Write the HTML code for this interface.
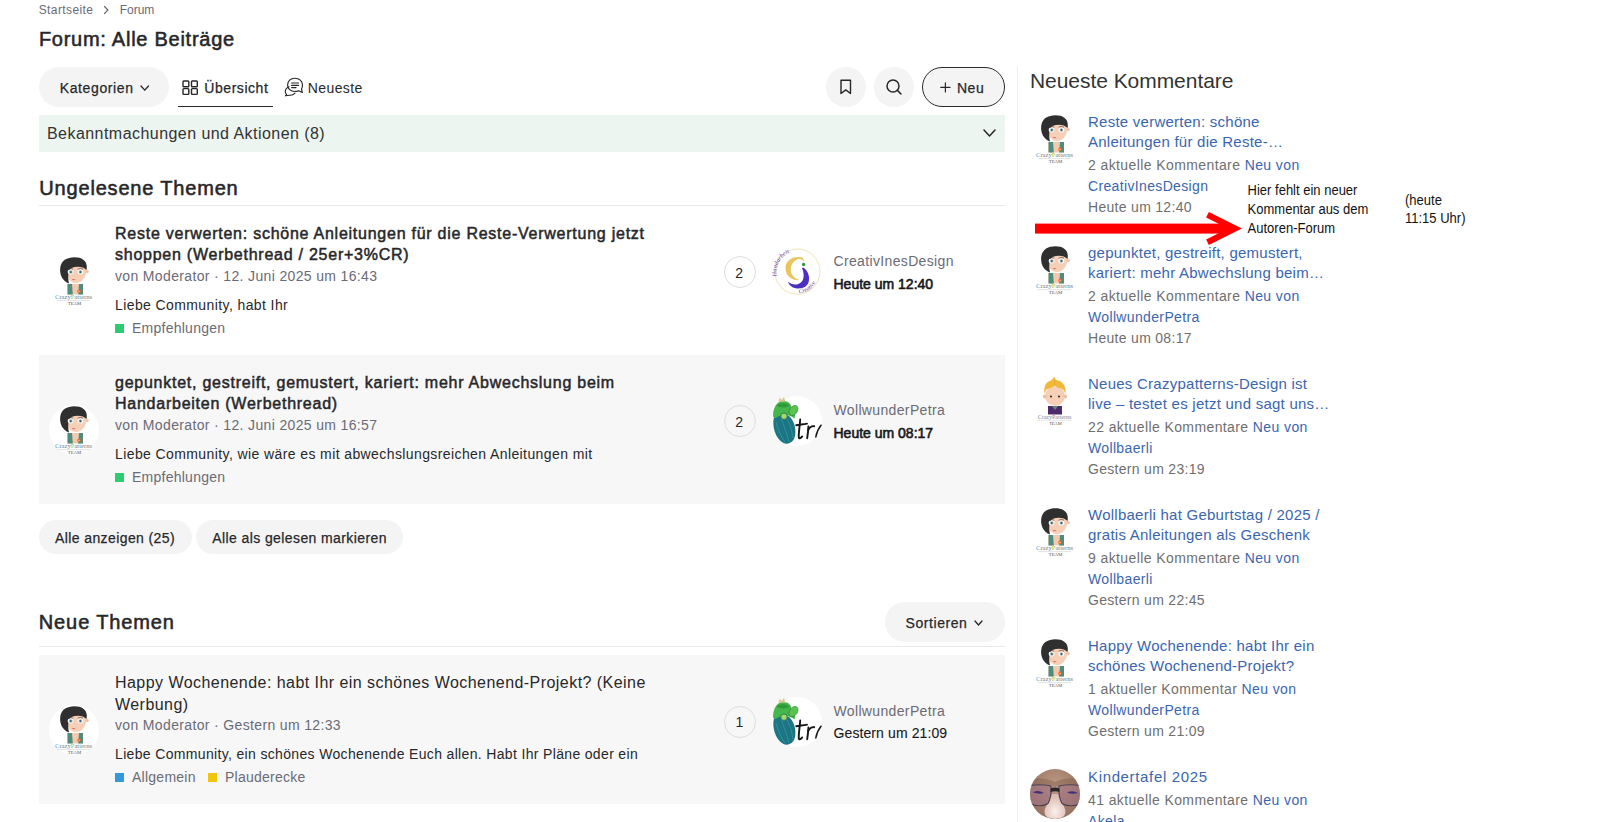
<!DOCTYPE html><html><head><meta charset="utf-8"><style>
html,body{margin:0;padding:0;background:#fff;width:1607px;height:822px;overflow:hidden;position:relative;}
body{font-family:"Liberation Sans",sans-serif;}
.t{position:absolute;white-space:nowrap;}
.r{position:absolute;}
</style></head><body>
<div class="t" style="left:38.70px;top:3.74px;font-size:12px;line-height:12px;color:#6b6b76;letter-spacing:0.4px;">Startseite</div>
<svg class="r" style="left:102px;top:5px" width="8" height="10" viewBox="0 0 8 10"><path d="M2.5 1.5 L6 5 L2.5 8.5" fill="none" stroke="#6b6b76" stroke-width="1.2" stroke-linecap="round" stroke-linejoin="round"/></svg>
<div class="t" style="left:119.70px;top:3.74px;font-size:12px;line-height:12px;color:#6b6b76;">Forum</div>
<div class="t" style="left:38.90px;top:28.77px;font-size:20px;line-height:20px;color:#27272a;letter-spacing:0.74px;-webkit-text-stroke:0.55px #27272a;">Forum: Alle Beiträge</div>
<div class="r" style="left:39px;top:67px;width:130px;height:40px;background:#f4f4f5;border-radius:20px;"></div>
<div class="t" style="left:59.80px;top:81.15px;font-size:14px;line-height:14px;color:#27272a;letter-spacing:0.6px;-webkit-text-stroke:0.25px #27272a;">Kategorien</div>
<svg class="r" style="left:140px;top:84.8px" width="9.5" height="6.2" viewBox="0 0 9.5 6.2"><path d="M1 1 L4.75 5.2 L8.5 1" fill="none" stroke="#27272a" stroke-width="1.3" stroke-linecap="round" stroke-linejoin="round"/></svg>
<svg class="r" style="left:182px;top:79.5px" width="17" height="16" viewBox="0 0 17 16"><g fill="none" stroke="#27272a" stroke-width="1.4"><rect x="1" y="1" width="5.8" height="5.8" rx="0.8"/><rect x="9.5" y="1" width="5.8" height="5.8" rx="0.8"/><rect x="1" y="8.6" width="5.8" height="5.8" rx="0.8"/><rect x="9.5" y="8.6" width="5.8" height="5.8" rx="0.8"/></g></svg>
<div class="t" style="left:204.30px;top:81.15px;font-size:14px;line-height:14px;color:#27272a;letter-spacing:0.55px;-webkit-text-stroke:0.25px #27272a;">Übersicht</div>
<div class="r" style="left:178px;top:105.5px;width:95px;height:1.6px;background:#27272a;"></div>
<svg class="r" style="left:284px;top:77px" width="20" height="20" viewBox="0 0 20 20"><g fill="none" stroke="#27272a" stroke-width="1.15" stroke-linejoin="round" stroke-linecap="round"><path d="M5 9.8 C2.8 10.8 1.3 12.5 1.3 14.6 C1.3 15.8 1.8 16.8 2.6 17.6 L1.4 18.8 L5.6 18.2 C7.6 18.4 9.6 17.6 11 16.2"/><path d="M10.8 1.2 C6.6 1.2 3.6 4 3.6 7.9 C3.6 11.7 6.6 14.5 10.8 14.5 C12.2 14.5 13.5 14.2 14.6 13.7 L18.4 15.6 L17.5 12 C18.2 10.9 18.5 9.4 18.5 7.9 C18.5 4 15.2 1.2 10.8 1.2Z"/><path d="M7.6 6 h7 M7.6 8.4 h7 M7.6 10.6 h4.5"/></g></svg>
<div class="t" style="left:307.80px;top:81.15px;font-size:14px;line-height:14px;color:#27272a;letter-spacing:0.4px;">Neueste</div>
<div class="r" style="left:826px;top:67px;width:40px;height:40px;background:#f4f4f5;border-radius:20px;"></div>
<svg class="r" style="left:839px;top:79px" width="14" height="16" viewBox="0 0 14 16"><path d="M2 1.2 h9.5 v13.3 l-4.75 -3.6 l-4.75 3.6z" fill="none" stroke="#27272a" stroke-width="1.4" stroke-linejoin="round"/></svg>
<div class="r" style="left:874px;top:67px;width:40px;height:40px;background:#f4f4f5;border-radius:20px;"></div>
<svg class="r" style="left:885px;top:78px" width="18" height="18" viewBox="0 0 18 18"><circle cx="8" cy="8" r="6" fill="none" stroke="#27272a" stroke-width="1.5"/><path d="M12.4 12.4 L16 16" stroke="#27272a" stroke-width="1.5" stroke-linecap="round"/></svg>
<div class="r" style="left:922px;top:67px;width:81px;height:38px;background:#f4f4f5;border-radius:20px;border:1px solid #2b2b2b;"></div>
<svg class="r" style="left:940px;top:82px" width="11" height="11" viewBox="0 0 11 11"><path d="M5.4 0.8 V10 M0.8 5.4 H10" stroke="#27272a" stroke-width="1.2" stroke-linecap="round"/></svg>
<div class="t" style="left:957.00px;top:81.15px;font-size:14px;line-height:14px;color:#27272a;letter-spacing:0.5px;-webkit-text-stroke:0.25px #27272a;">Neu</div>
<div class="r" style="left:39px;top:115px;width:966px;height:37px;background:#edf5f0;"></div>
<div class="t" style="left:47.00px;top:125.66px;font-size:16px;line-height:16px;color:#333;letter-spacing:0.45px;">Bekanntmachungen und Aktionen (8)</div>
<svg class="r" style="left:982.5px;top:129px" width="13" height="8" viewBox="0 0 13 8"><path d="M1 1 L6.5 7 L12 1" fill="none" stroke="#27272a" stroke-width="1.5" stroke-linecap="round" stroke-linejoin="round"/></svg>
<div class="r" style="left:1017px;top:67px;width:1px;height:755px;background:#ededed;"></div>
<div class="t" style="left:39.30px;top:178.07px;font-size:20px;line-height:20px;color:#27272a;letter-spacing:0.82px;-webkit-text-stroke:0.55px #27272a;">Ungelesene Themen</div>
<div class="r" style="left:39px;top:205px;width:966px;height:1px;background:#e8e8e8;"></div>
<svg class="r" style="left:48.8px;top:255.8px" width="50" height="50" viewBox="0 0 50 50">
<path d="M18.5 28 h15.5 v10.5 h-15.5z" fill="#f3c9b0"/>
<path d="M18.5 28 h4.5 l0.8 10.5 h-5.3z" fill="#4f8c7b"/><path d="M34 28 h-4 l-0.8 10.5 h4.8z" fill="#4f8c7b"/>
<circle cx="30" cy="35.3" r="1.7" fill="#e8692d"/><circle cx="30" cy="35.3" r="0.6" fill="#fff3c0"/>
<path d="M17 10 C17 6 21 4.5 27 4.5 C33 4.5 37.5 7 37.5 13 C37.5 21 33 27 27 27 C21 27 17 21 17 14z" fill="#f6cfb7"/>
<circle cx="38.2" cy="15.5" r="1.6" fill="#f0bfa5"/>
<path d="M20 27.5 C13.5 25 10.5 19 11.2 12 C12 4.5 18 1.2 25.5 1.2 C32.5 1.2 37.8 4.5 37.8 10.5 L37.6 14 C34.5 10.6 28 9.6 22.5 12 C19 14.5 18.6 21 20 27.5z" fill="#2f2f2f"/>
<ellipse cx="21.6" cy="16" rx="2.9" ry="2.4" fill="#fff"/><ellipse cx="31.4" cy="16" rx="2.9" ry="2.4" fill="#fff"/>
<circle cx="21.8" cy="16" r="1.8" fill="#8fb0b4"/><circle cx="31.4" cy="16" r="1.8" fill="#8fb0b4"/>
<circle cx="21.8" cy="16" r="0.8" fill="#2b3b3b"/><circle cx="31.4" cy="16" r="0.8" fill="#2b3b3b"/>
<path d="M18.8 13.2 q2.6 -1.6 5.4 0 M28.6 13.2 q2.6 -1.6 5.4 0" stroke="#3a3030" stroke-width="0.6" fill="none"/>
<path d="M22.8 23.3 q1.8 1.6 3.8 0.2 q-1.9 -0.4 -3.8 -0.2z" fill="#d9503a"/>
<text x="24.5" y="43" font-size="6.3" text-anchor="middle" fill="#6f7f8a" font-family="Liberation Serif" textLength="37" lengthAdjust="spacingAndGlyphs"><tspan fill="#4aa8d8">C</tspan>razy<tspan fill="#8cc63f">P</tspan>atterns</text>
<path d="M8 44.6 h33" stroke="#c9c9c9" stroke-width="0.5"/>
<text x="25.5" y="48.8" font-size="4.8" text-anchor="middle" fill="#555" font-family="Liberation Serif">TEAM</text></svg>
<div class="t" style="left:115.00px;top:225.96px;font-size:16px;line-height:16px;color:#27272a;letter-spacing:0.75px;-webkit-text-stroke:0.5px #27272a;">Reste verwerten: schöne Anleitungen für die Reste-Verwertung jetzt</div>
<div class="t" style="left:115.00px;top:246.96px;font-size:16px;line-height:16px;color:#27272a;letter-spacing:0.75px;-webkit-text-stroke:0.5px #27272a;">shoppen (Werbethread / 25er+3%CR)</div>
<div class="t" style="left:115.00px;top:268.85px;font-size:14px;line-height:14px;color:#6b6b76;letter-spacing:0.35px;">von Moderator · 12. Juni 2025 um 16:43</div>
<div class="t" style="left:115.00px;top:297.75px;font-size:14px;line-height:14px;color:#27272a;letter-spacing:0.4px;">Liebe Community, habt Ihr</div>
<div class="r" style="left:115px;top:324px;width:9px;height:9px;background:#2ecc71;"></div>
<div class="t" style="left:132.00px;top:320.85px;font-size:14px;line-height:14px;color:#6b6b76;letter-spacing:0.25px;">Empfehlungen</div>
<div class="r" style="left:724px;top:256px;width:30px;height:30px;background:transparent;border:1px solid #dedede;border-radius:50%;"></div>
<div class="t" style="left:735.30px;top:266.15px;font-size:14px;line-height:14px;color:#27272a;">2</div>
<svg class="r" style="left:772px;top:247px" width="50" height="50" viewBox="0 0 50 50"><circle cx="25" cy="25" r="25" fill="#fff"/>
<circle cx="25.4" cy="24.6" r="22.6" fill="none" stroke="#efdca6" stroke-width="0.8"/>
<path d="M31.5 11 C23 7.5 13.2 12.5 13.5 21.5 C13.8 29.5 20.5 34 27.5 33 C21.5 31 18.3 27 18.8 21.5 C19.3 15.2 24.5 11 31.5 11 Z" fill="#e9c65c"/>
<path d="M27 10.6 C30 10.5 32.5 12 32.5 14.5 C31.5 13 29.5 12 27 12z" fill="#e9c65c"/>
<circle cx="31.6" cy="17.4" r="1.7" fill="#2a9a3a"/>
<path d="M31.2 20.6 C36 23.5 38.2 30 36.6 35.2 C34.8 40.6 29 42 23.6 41.2 C19.8 40.6 17.2 38.6 15.9 34.6 C18.6 37.2 22 38 25.8 37.2 C30 36.2 32 32.2 31.6 27.6 C31.4 25 31 22.8 29.8 21.2 Z" fill="#4b2fc0"/>
<path id="ia1" d="M4.8 29 A20.5 20.5 0 0 1 25.5 4.5" fill="none"/>
<path id="ia2" d="M27 46.2 A21 21 0 0 0 46.3 27.5" fill="none"/>
<text font-size="6.2" fill="#5b3aa0" font-style="italic" font-family="Liberation Serif"><textPath href="#ia1">Handarbeit</textPath></text>
<text font-size="6" fill="#5b3aa0" font-style="italic" font-family="Liberation Serif"><textPath href="#ia2">Creative</textPath></text></svg>
<div class="t" style="left:833.50px;top:254.25px;font-size:14px;line-height:14px;color:#6b6b76;letter-spacing:0.35px;">CreativInesDesign</div>
<div class="t" style="left:833.50px;top:277.05px;font-size:14px;line-height:14px;color:#18181b;-webkit-text-stroke:0.6px #18181b;">Heute um 12:40</div>
<div class="r" style="left:39px;top:355px;width:966px;height:149px;background:#f7f7f7;"></div>
<svg class="r" style="left:48.8px;top:404.8px" width="50" height="50" viewBox="0 0 50 50"><circle cx="25" cy="25" r="25" fill="#fff"/>
<path d="M18.5 28 h15.5 v10.5 h-15.5z" fill="#f3c9b0"/>
<path d="M18.5 28 h4.5 l0.8 10.5 h-5.3z" fill="#4f8c7b"/><path d="M34 28 h-4 l-0.8 10.5 h4.8z" fill="#4f8c7b"/>
<circle cx="30" cy="35.3" r="1.7" fill="#e8692d"/><circle cx="30" cy="35.3" r="0.6" fill="#fff3c0"/>
<path d="M17 10 C17 6 21 4.5 27 4.5 C33 4.5 37.5 7 37.5 13 C37.5 21 33 27 27 27 C21 27 17 21 17 14z" fill="#f6cfb7"/>
<circle cx="38.2" cy="15.5" r="1.6" fill="#f0bfa5"/>
<path d="M20 27.5 C13.5 25 10.5 19 11.2 12 C12 4.5 18 1.2 25.5 1.2 C32.5 1.2 37.8 4.5 37.8 10.5 L37.6 14 C34.5 10.6 28 9.6 22.5 12 C19 14.5 18.6 21 20 27.5z" fill="#2f2f2f"/>
<ellipse cx="21.6" cy="16" rx="2.9" ry="2.4" fill="#fff"/><ellipse cx="31.4" cy="16" rx="2.9" ry="2.4" fill="#fff"/>
<circle cx="21.8" cy="16" r="1.8" fill="#8fb0b4"/><circle cx="31.4" cy="16" r="1.8" fill="#8fb0b4"/>
<circle cx="21.8" cy="16" r="0.8" fill="#2b3b3b"/><circle cx="31.4" cy="16" r="0.8" fill="#2b3b3b"/>
<path d="M18.8 13.2 q2.6 -1.6 5.4 0 M28.6 13.2 q2.6 -1.6 5.4 0" stroke="#3a3030" stroke-width="0.6" fill="none"/>
<path d="M22.8 23.3 q1.8 1.6 3.8 0.2 q-1.9 -0.4 -3.8 -0.2z" fill="#d9503a"/>
<text x="24.5" y="43" font-size="6.3" text-anchor="middle" fill="#6f7f8a" font-family="Liberation Serif" textLength="37" lengthAdjust="spacingAndGlyphs"><tspan fill="#4aa8d8">C</tspan>razy<tspan fill="#8cc63f">P</tspan>atterns</text>
<path d="M8 44.6 h33" stroke="#c9c9c9" stroke-width="0.5"/>
<text x="25.5" y="48.8" font-size="4.8" text-anchor="middle" fill="#555" font-family="Liberation Serif">TEAM</text></svg>
<div class="t" style="left:115.00px;top:374.96px;font-size:16px;line-height:16px;color:#27272a;letter-spacing:0.75px;-webkit-text-stroke:0.5px #27272a;">gepunktet, gestreift, gemustert, kariert: mehr Abwechslung beim</div>
<div class="t" style="left:115.00px;top:395.96px;font-size:16px;line-height:16px;color:#27272a;letter-spacing:0.75px;-webkit-text-stroke:0.5px #27272a;">Handarbeiten (Werbethread)</div>
<div class="t" style="left:115.00px;top:417.85px;font-size:14px;line-height:14px;color:#6b6b76;letter-spacing:0.35px;">von Moderator · 12. Juni 2025 um 16:57</div>
<div class="t" style="left:115.00px;top:446.75px;font-size:14px;line-height:14px;color:#27272a;letter-spacing:0.4px;">Liebe Community, wie wäre es mit abwechslungsreichen Anleitungen mit</div>
<div class="r" style="left:115px;top:473px;width:9px;height:9px;background:#2ecc71;"></div>
<div class="t" style="left:132.00px;top:469.85px;font-size:14px;line-height:14px;color:#6b6b76;letter-spacing:0.25px;">Empfehlungen</div>
<div class="r" style="left:724px;top:405px;width:30px;height:30px;background:transparent;border:1px solid #dedede;border-radius:50%;"></div>
<div class="t" style="left:735.30px;top:415.15px;font-size:14px;line-height:14px;color:#27272a;">2</div>
<svg class="r" style="left:772px;top:396px" width="50" height="50" viewBox="0 0 50 50"><circle cx="25" cy="25" r="25" fill="#fff"/>
<path d="M1.8 22 C0 30 3 42 11 46.8 C16 49.3 22.5 46.5 23.3 38 C24 30 21 22 15 19 C10 17 4 18 1.8 22 Z" fill="#1d7482"/>
<path d="M4 26 C6 34 9 41 13 46 M9 22 C12 30 15 38 17 46 M14 20.5 C18 28 20 35 21 42" stroke="#2b93a0" stroke-width="0.9" fill="none"/>
<path d="M1.2 21 C0.4 12.5 5 5 11 5 C16.5 5 20 8.5 19.5 13 C22 15 24 18.5 22.5 22.5 C18 18.5 10 17.5 3.5 22 Z" fill="#45b649"/>
<path d="M4.5 9.5 C7.5 6.5 14.5 6.5 17.5 9.5 C14.5 12 7.5 12 4.5 9.5Z" fill="#2f9a3a"/>
<ellipse cx="21.5" cy="14.5" rx="3.8" ry="5.6" transform="rotate(35 21.5 14.5)" fill="#5cc24f" stroke="#2d7f36" stroke-width="0.6"/>
<circle cx="12" cy="20.2" r="3.2" fill="#a7d86b" stroke="#1d6f55" stroke-width="0.8"/>
<path d="M6.5 5.8 L7.6 1.5 L9.8 4 L12 0.8 L13.2 5.5Z" fill="#d9c793"/>
<g stroke="#161616" stroke-width="1.9" fill="none" stroke-linecap="round">
<path d="M28.2 23.5 C27.8 30 26.4 37.5 26.8 41.8 C27.2 43 29 42 30.2 40.4"/>
<path d="M24.2 29.2 C28 28.6 31.8 28.2 35 27.6"/>
<path d="M36.4 30.5 C36.2 34.5 35.8 38.5 35.2 42.2"/>
<path d="M36.2 33.6 C38.2 30.6 40.2 29.8 42.2 30.2"/>
<path d="M49 29.2 C46.6 32.2 44.6 36.2 43.8 41" stroke-width="1.5"/></g></svg>
<div class="t" style="left:833.50px;top:403.25px;font-size:14px;line-height:14px;color:#6b6b76;letter-spacing:0.35px;">WollwunderPetra</div>
<div class="t" style="left:833.50px;top:426.05px;font-size:14px;line-height:14px;color:#18181b;-webkit-text-stroke:0.6px #18181b;">Heute um 08:17</div>
<div class="r" style="left:39px;top:520px;width:153px;height:34px;background:#f4f4f5;border-radius:17px;"></div>
<div class="t" style="left:55.00px;top:530.85px;font-size:14px;line-height:14px;color:#27272a;letter-spacing:0.4px;-webkit-text-stroke:0.25px #27272a;">Alle anzeigen (25)</div>
<div class="r" style="left:196px;top:520px;width:207px;height:34px;background:#f4f4f5;border-radius:17px;"></div>
<div class="t" style="left:212.30px;top:530.85px;font-size:14px;line-height:14px;color:#27272a;letter-spacing:0.4px;-webkit-text-stroke:0.25px #27272a;">Alle als gelesen markieren</div>
<div class="t" style="left:38.80px;top:612.27px;font-size:20px;line-height:20px;color:#27272a;letter-spacing:0.88px;-webkit-text-stroke:0.55px #27272a;">Neue Themen</div>
<div class="r" style="left:885px;top:602px;width:120px;height:40px;background:#f4f4f5;border-radius:20px;"></div>
<div class="t" style="left:905.60px;top:616.15px;font-size:14px;line-height:14px;color:#27272a;letter-spacing:0.55px;-webkit-text-stroke:0.25px #27272a;">Sortieren</div>
<svg class="r" style="left:974px;top:619.5px" width="9" height="6" viewBox="0 0 9 6"><path d="M1 1 L4.5 5 L8 1" fill="none" stroke="#27272a" stroke-width="1.3" stroke-linecap="round" stroke-linejoin="round"/></svg>
<div class="r" style="left:39px;top:646px;width:966px;height:1px;background:#e8e8e8;"></div>
<div class="r" style="left:39px;top:655px;width:966px;height:149px;background:#f7f7f7;"></div>
<svg class="r" style="left:48.8px;top:704.8px" width="50" height="50" viewBox="0 0 50 50"><circle cx="25" cy="25" r="25" fill="#fff"/>
<path d="M18.5 28 h15.5 v10.5 h-15.5z" fill="#f3c9b0"/>
<path d="M18.5 28 h4.5 l0.8 10.5 h-5.3z" fill="#4f8c7b"/><path d="M34 28 h-4 l-0.8 10.5 h4.8z" fill="#4f8c7b"/>
<circle cx="30" cy="35.3" r="1.7" fill="#e8692d"/><circle cx="30" cy="35.3" r="0.6" fill="#fff3c0"/>
<path d="M17 10 C17 6 21 4.5 27 4.5 C33 4.5 37.5 7 37.5 13 C37.5 21 33 27 27 27 C21 27 17 21 17 14z" fill="#f6cfb7"/>
<circle cx="38.2" cy="15.5" r="1.6" fill="#f0bfa5"/>
<path d="M20 27.5 C13.5 25 10.5 19 11.2 12 C12 4.5 18 1.2 25.5 1.2 C32.5 1.2 37.8 4.5 37.8 10.5 L37.6 14 C34.5 10.6 28 9.6 22.5 12 C19 14.5 18.6 21 20 27.5z" fill="#2f2f2f"/>
<ellipse cx="21.6" cy="16" rx="2.9" ry="2.4" fill="#fff"/><ellipse cx="31.4" cy="16" rx="2.9" ry="2.4" fill="#fff"/>
<circle cx="21.8" cy="16" r="1.8" fill="#8fb0b4"/><circle cx="31.4" cy="16" r="1.8" fill="#8fb0b4"/>
<circle cx="21.8" cy="16" r="0.8" fill="#2b3b3b"/><circle cx="31.4" cy="16" r="0.8" fill="#2b3b3b"/>
<path d="M18.8 13.2 q2.6 -1.6 5.4 0 M28.6 13.2 q2.6 -1.6 5.4 0" stroke="#3a3030" stroke-width="0.6" fill="none"/>
<path d="M22.8 23.3 q1.8 1.6 3.8 0.2 q-1.9 -0.4 -3.8 -0.2z" fill="#d9503a"/>
<text x="24.5" y="43" font-size="6.3" text-anchor="middle" fill="#6f7f8a" font-family="Liberation Serif" textLength="37" lengthAdjust="spacingAndGlyphs"><tspan fill="#4aa8d8">C</tspan>razy<tspan fill="#8cc63f">P</tspan>atterns</text>
<path d="M8 44.6 h33" stroke="#c9c9c9" stroke-width="0.5"/>
<text x="25.5" y="48.8" font-size="4.8" text-anchor="middle" fill="#555" font-family="Liberation Serif">TEAM</text></svg>
<div class="t" style="left:115.00px;top:674.86px;font-size:16px;line-height:16px;color:#27272a;letter-spacing:0.45px;">Happy Wochenende: habt Ihr ein schönes Wochenend-Projekt? (Keine</div>
<div class="t" style="left:115.00px;top:696.56px;font-size:16px;line-height:16px;color:#27272a;letter-spacing:0.45px;">Werbung)</div>
<div class="t" style="left:115.00px;top:717.95px;font-size:14px;line-height:14px;color:#6b6b76;letter-spacing:0.35px;">von Moderator · Gestern um 12:33</div>
<div class="t" style="left:115.00px;top:746.85px;font-size:14px;line-height:14px;color:#27272a;letter-spacing:0.34px;">Liebe Community, ein schönes Wochenende Euch allen. Habt Ihr Pläne oder ein</div>
<div class="r" style="left:115px;top:773px;width:9px;height:9px;background:#3498db;"></div>
<div class="t" style="left:132.00px;top:769.85px;font-size:14px;line-height:14px;color:#6b6b76;letter-spacing:0.25px;">Allgemein</div>
<div class="r" style="left:208px;top:773px;width:9px;height:9px;background:#f1c40f;"></div>
<div class="t" style="left:225.00px;top:769.85px;font-size:14px;line-height:14px;color:#6b6b76;letter-spacing:0.25px;">Plauderecke</div>
<div class="r" style="left:724px;top:706px;width:30px;height:30px;background:transparent;border:1px solid #dedede;border-radius:50%;"></div>
<div class="t" style="left:735.50px;top:715.15px;font-size:14px;line-height:14px;color:#27272a;">1</div>
<svg class="r" style="left:772px;top:697px" width="50" height="50" viewBox="0 0 50 50"><circle cx="25" cy="25" r="25" fill="#fff"/>
<path d="M1.8 22 C0 30 3 42 11 46.8 C16 49.3 22.5 46.5 23.3 38 C24 30 21 22 15 19 C10 17 4 18 1.8 22 Z" fill="#1d7482"/>
<path d="M4 26 C6 34 9 41 13 46 M9 22 C12 30 15 38 17 46 M14 20.5 C18 28 20 35 21 42" stroke="#2b93a0" stroke-width="0.9" fill="none"/>
<path d="M1.2 21 C0.4 12.5 5 5 11 5 C16.5 5 20 8.5 19.5 13 C22 15 24 18.5 22.5 22.5 C18 18.5 10 17.5 3.5 22 Z" fill="#45b649"/>
<path d="M4.5 9.5 C7.5 6.5 14.5 6.5 17.5 9.5 C14.5 12 7.5 12 4.5 9.5Z" fill="#2f9a3a"/>
<ellipse cx="21.5" cy="14.5" rx="3.8" ry="5.6" transform="rotate(35 21.5 14.5)" fill="#5cc24f" stroke="#2d7f36" stroke-width="0.6"/>
<circle cx="12" cy="20.2" r="3.2" fill="#a7d86b" stroke="#1d6f55" stroke-width="0.8"/>
<path d="M6.5 5.8 L7.6 1.5 L9.8 4 L12 0.8 L13.2 5.5Z" fill="#d9c793"/>
<g stroke="#161616" stroke-width="1.9" fill="none" stroke-linecap="round">
<path d="M28.2 23.5 C27.8 30 26.4 37.5 26.8 41.8 C27.2 43 29 42 30.2 40.4"/>
<path d="M24.2 29.2 C28 28.6 31.8 28.2 35 27.6"/>
<path d="M36.4 30.5 C36.2 34.5 35.8 38.5 35.2 42.2"/>
<path d="M36.2 33.6 C38.2 30.6 40.2 29.8 42.2 30.2"/>
<path d="M49 29.2 C46.6 32.2 44.6 36.2 43.8 41" stroke-width="1.5"/></g></svg>
<div class="t" style="left:833.50px;top:703.55px;font-size:14px;line-height:14px;color:#6b6b76;letter-spacing:0.35px;">WollwunderPetra</div>
<div class="t" style="left:833.50px;top:726.35px;font-size:14px;line-height:14px;color:#18181b;letter-spacing:0.1px;-webkit-text-stroke:0.1px #18181b;">Gestern um 21:09</div>
<div class="t" style="left:1030.00px;top:70.42px;font-size:21px;line-height:21px;color:#333;letter-spacing:-0.05px;">Neueste Kommentare</div>
<svg class="r" style="left:1030px;top:113.5px" width="50" height="50" viewBox="0 0 50 50">
<path d="M18.5 28 h15.5 v10.5 h-15.5z" fill="#f3c9b0"/>
<path d="M18.5 28 h4.5 l0.8 10.5 h-5.3z" fill="#4f8c7b"/><path d="M34 28 h-4 l-0.8 10.5 h4.8z" fill="#4f8c7b"/>
<circle cx="30" cy="35.3" r="1.7" fill="#e8692d"/><circle cx="30" cy="35.3" r="0.6" fill="#fff3c0"/>
<path d="M17 10 C17 6 21 4.5 27 4.5 C33 4.5 37.5 7 37.5 13 C37.5 21 33 27 27 27 C21 27 17 21 17 14z" fill="#f6cfb7"/>
<circle cx="38.2" cy="15.5" r="1.6" fill="#f0bfa5"/>
<path d="M20 27.5 C13.5 25 10.5 19 11.2 12 C12 4.5 18 1.2 25.5 1.2 C32.5 1.2 37.8 4.5 37.8 10.5 L37.6 14 C34.5 10.6 28 9.6 22.5 12 C19 14.5 18.6 21 20 27.5z" fill="#2f2f2f"/>
<ellipse cx="21.6" cy="16" rx="2.9" ry="2.4" fill="#fff"/><ellipse cx="31.4" cy="16" rx="2.9" ry="2.4" fill="#fff"/>
<circle cx="21.8" cy="16" r="1.8" fill="#8fb0b4"/><circle cx="31.4" cy="16" r="1.8" fill="#8fb0b4"/>
<circle cx="21.8" cy="16" r="0.8" fill="#2b3b3b"/><circle cx="31.4" cy="16" r="0.8" fill="#2b3b3b"/>
<path d="M18.8 13.2 q2.6 -1.6 5.4 0 M28.6 13.2 q2.6 -1.6 5.4 0" stroke="#3a3030" stroke-width="0.6" fill="none"/>
<path d="M22.8 23.3 q1.8 1.6 3.8 0.2 q-1.9 -0.4 -3.8 -0.2z" fill="#d9503a"/>
<text x="24.5" y="43" font-size="6.3" text-anchor="middle" fill="#6f7f8a" font-family="Liberation Serif" textLength="37" lengthAdjust="spacingAndGlyphs"><tspan fill="#4aa8d8">C</tspan>razy<tspan fill="#8cc63f">P</tspan>atterns</text>
<path d="M8 44.6 h33" stroke="#c9c9c9" stroke-width="0.5"/>
<text x="25.5" y="48.8" font-size="4.8" text-anchor="middle" fill="#555" font-family="Liberation Serif">TEAM</text></svg>
<div class="t" style="left:1088.00px;top:113.90px;font-size:15px;line-height:15px;color:#3a66b0;letter-spacing:0.25px;">Reste verwerten: schöne</div>
<div class="t" style="left:1088.00px;top:134.10px;font-size:15px;line-height:15px;color:#3a66b0;letter-spacing:0.25px;">Anleitungen für die Reste-…</div>
<div class="t" style="left:1088.00px;top:158.35px;font-size:14px;line-height:14px;color:#6f6f6f;letter-spacing:0.4px;">2 aktuelle Kommentare <span style="color:#3a66b0">Neu von</span></div>
<div class="t" style="left:1088.00px;top:179.35px;font-size:14px;line-height:14px;color:#3a66b0;letter-spacing:0.35px;">CreativInesDesign</div>
<div class="t" style="left:1088.00px;top:200.25px;font-size:14px;line-height:14px;color:#6f6f6f;letter-spacing:0.3px;">Heute um 12:40</div>
<svg class="r" style="left:1030px;top:244.5px" width="50" height="50" viewBox="0 0 50 50">
<path d="M18.5 28 h15.5 v10.5 h-15.5z" fill="#f3c9b0"/>
<path d="M18.5 28 h4.5 l0.8 10.5 h-5.3z" fill="#4f8c7b"/><path d="M34 28 h-4 l-0.8 10.5 h4.8z" fill="#4f8c7b"/>
<circle cx="30" cy="35.3" r="1.7" fill="#e8692d"/><circle cx="30" cy="35.3" r="0.6" fill="#fff3c0"/>
<path d="M17 10 C17 6 21 4.5 27 4.5 C33 4.5 37.5 7 37.5 13 C37.5 21 33 27 27 27 C21 27 17 21 17 14z" fill="#f6cfb7"/>
<circle cx="38.2" cy="15.5" r="1.6" fill="#f0bfa5"/>
<path d="M20 27.5 C13.5 25 10.5 19 11.2 12 C12 4.5 18 1.2 25.5 1.2 C32.5 1.2 37.8 4.5 37.8 10.5 L37.6 14 C34.5 10.6 28 9.6 22.5 12 C19 14.5 18.6 21 20 27.5z" fill="#2f2f2f"/>
<ellipse cx="21.6" cy="16" rx="2.9" ry="2.4" fill="#fff"/><ellipse cx="31.4" cy="16" rx="2.9" ry="2.4" fill="#fff"/>
<circle cx="21.8" cy="16" r="1.8" fill="#8fb0b4"/><circle cx="31.4" cy="16" r="1.8" fill="#8fb0b4"/>
<circle cx="21.8" cy="16" r="0.8" fill="#2b3b3b"/><circle cx="31.4" cy="16" r="0.8" fill="#2b3b3b"/>
<path d="M18.8 13.2 q2.6 -1.6 5.4 0 M28.6 13.2 q2.6 -1.6 5.4 0" stroke="#3a3030" stroke-width="0.6" fill="none"/>
<path d="M22.8 23.3 q1.8 1.6 3.8 0.2 q-1.9 -0.4 -3.8 -0.2z" fill="#d9503a"/>
<text x="24.5" y="43" font-size="6.3" text-anchor="middle" fill="#6f7f8a" font-family="Liberation Serif" textLength="37" lengthAdjust="spacingAndGlyphs"><tspan fill="#4aa8d8">C</tspan>razy<tspan fill="#8cc63f">P</tspan>atterns</text>
<path d="M8 44.6 h33" stroke="#c9c9c9" stroke-width="0.5"/>
<text x="25.5" y="48.8" font-size="4.8" text-anchor="middle" fill="#555" font-family="Liberation Serif">TEAM</text></svg>
<div class="t" style="left:1088.00px;top:244.90px;font-size:15px;line-height:15px;color:#3a66b0;letter-spacing:0.25px;">gepunktet, gestreift, gemustert,</div>
<div class="t" style="left:1088.00px;top:265.10px;font-size:15px;line-height:15px;color:#3a66b0;letter-spacing:0.25px;">kariert: mehr Abwechslung beim…</div>
<div class="t" style="left:1088.00px;top:289.35px;font-size:14px;line-height:14px;color:#6f6f6f;letter-spacing:0.4px;">2 aktuelle Kommentare <span style="color:#3a66b0">Neu von</span></div>
<div class="t" style="left:1088.00px;top:310.35px;font-size:14px;line-height:14px;color:#3a66b0;letter-spacing:0.35px;">WollwunderPetra</div>
<div class="t" style="left:1088.00px;top:331.25px;font-size:14px;line-height:14px;color:#6f6f6f;letter-spacing:0.3px;">Heute um 08:17</div>
<svg class="r" style="left:1030px;top:375.5px" width="50" height="50" viewBox="0 0 50 50">
<path d="M18 30 h14 v8.5 h-14z" fill="#4d2a69"/>
<path d="M22 30 l3 4 l3 -4z" fill="#5e8a7a"/>
<ellipse cx="25" cy="20" rx="10" ry="10" fill="#f6cfb7"/>
<circle cx="14.8" cy="20.5" r="2" fill="#f0bfa5"/><circle cx="35.2" cy="20.5" r="2" fill="#f0bfa5"/>
<path d="M14.5 18 C13.5 10 16 6 21 4.5 L24.5 0.8 L26 4 C32 5 36.5 9 35.5 18 C34.5 14.5 33 13 31 12.5 C28 12 26.5 11 25 9.5 C23 11.5 19 12.5 16.5 13.5 C15.5 15 15 16.5 14.5 18z" fill="#f0b93c"/><path d="M25 9.5 L24.5 4" stroke="#d99a20" stroke-width="0.5"/>
<circle cx="21" cy="20.5" r="1.1" fill="#333"/><circle cx="29" cy="20.5" r="1.1" fill="#333"/>
<text x="24.5" y="42.5" font-size="6" text-anchor="middle" fill="#7a8a96" font-family="Liberation Serif">CrazyPatterns</text>
<path d="M8 44.3 h33" stroke="#c9c9c9" stroke-width="0.5"/>
<text x="25.5" y="48.5" font-size="4.5" text-anchor="middle" fill="#555" font-family="Liberation Serif">TEAM</text></svg>
<div class="t" style="left:1088.00px;top:375.90px;font-size:15px;line-height:15px;color:#3a66b0;letter-spacing:0.25px;">Neues Crazypatterns-Design ist</div>
<div class="t" style="left:1088.00px;top:396.10px;font-size:15px;line-height:15px;color:#3a66b0;letter-spacing:0.25px;">live – testet es jetzt und sagt uns…</div>
<div class="t" style="left:1088.00px;top:420.35px;font-size:14px;line-height:14px;color:#6f6f6f;letter-spacing:0.4px;">22 aktuelle Kommentare <span style="color:#3a66b0">Neu von</span></div>
<div class="t" style="left:1088.00px;top:441.35px;font-size:14px;line-height:14px;color:#3a66b0;letter-spacing:0.35px;">Wollbaerli</div>
<div class="t" style="left:1088.00px;top:462.25px;font-size:14px;line-height:14px;color:#6f6f6f;letter-spacing:0.3px;">Gestern um 23:19</div>
<svg class="r" style="left:1030px;top:506.5px" width="50" height="50" viewBox="0 0 50 50">
<path d="M18.5 28 h15.5 v10.5 h-15.5z" fill="#f3c9b0"/>
<path d="M18.5 28 h4.5 l0.8 10.5 h-5.3z" fill="#4f8c7b"/><path d="M34 28 h-4 l-0.8 10.5 h4.8z" fill="#4f8c7b"/>
<circle cx="30" cy="35.3" r="1.7" fill="#e8692d"/><circle cx="30" cy="35.3" r="0.6" fill="#fff3c0"/>
<path d="M17 10 C17 6 21 4.5 27 4.5 C33 4.5 37.5 7 37.5 13 C37.5 21 33 27 27 27 C21 27 17 21 17 14z" fill="#f6cfb7"/>
<circle cx="38.2" cy="15.5" r="1.6" fill="#f0bfa5"/>
<path d="M20 27.5 C13.5 25 10.5 19 11.2 12 C12 4.5 18 1.2 25.5 1.2 C32.5 1.2 37.8 4.5 37.8 10.5 L37.6 14 C34.5 10.6 28 9.6 22.5 12 C19 14.5 18.6 21 20 27.5z" fill="#2f2f2f"/>
<ellipse cx="21.6" cy="16" rx="2.9" ry="2.4" fill="#fff"/><ellipse cx="31.4" cy="16" rx="2.9" ry="2.4" fill="#fff"/>
<circle cx="21.8" cy="16" r="1.8" fill="#8fb0b4"/><circle cx="31.4" cy="16" r="1.8" fill="#8fb0b4"/>
<circle cx="21.8" cy="16" r="0.8" fill="#2b3b3b"/><circle cx="31.4" cy="16" r="0.8" fill="#2b3b3b"/>
<path d="M18.8 13.2 q2.6 -1.6 5.4 0 M28.6 13.2 q2.6 -1.6 5.4 0" stroke="#3a3030" stroke-width="0.6" fill="none"/>
<path d="M22.8 23.3 q1.8 1.6 3.8 0.2 q-1.9 -0.4 -3.8 -0.2z" fill="#d9503a"/>
<text x="24.5" y="43" font-size="6.3" text-anchor="middle" fill="#6f7f8a" font-family="Liberation Serif" textLength="37" lengthAdjust="spacingAndGlyphs"><tspan fill="#4aa8d8">C</tspan>razy<tspan fill="#8cc63f">P</tspan>atterns</text>
<path d="M8 44.6 h33" stroke="#c9c9c9" stroke-width="0.5"/>
<text x="25.5" y="48.8" font-size="4.8" text-anchor="middle" fill="#555" font-family="Liberation Serif">TEAM</text></svg>
<div class="t" style="left:1088.00px;top:506.90px;font-size:15px;line-height:15px;color:#3a66b0;letter-spacing:0.25px;">Wollbaerli hat Geburtstag / 2025 /</div>
<div class="t" style="left:1088.00px;top:527.10px;font-size:15px;line-height:15px;color:#3a66b0;letter-spacing:0.25px;">gratis Anleitungen als Geschenk</div>
<div class="t" style="left:1088.00px;top:551.35px;font-size:14px;line-height:14px;color:#6f6f6f;letter-spacing:0.4px;">9 aktuelle Kommentare <span style="color:#3a66b0">Neu von</span></div>
<div class="t" style="left:1088.00px;top:572.35px;font-size:14px;line-height:14px;color:#3a66b0;letter-spacing:0.35px;">Wollbaerli</div>
<div class="t" style="left:1088.00px;top:593.25px;font-size:14px;line-height:14px;color:#6f6f6f;letter-spacing:0.3px;">Gestern um 22:45</div>
<svg class="r" style="left:1030px;top:637.5px" width="50" height="50" viewBox="0 0 50 50">
<path d="M18.5 28 h15.5 v10.5 h-15.5z" fill="#f3c9b0"/>
<path d="M18.5 28 h4.5 l0.8 10.5 h-5.3z" fill="#4f8c7b"/><path d="M34 28 h-4 l-0.8 10.5 h4.8z" fill="#4f8c7b"/>
<circle cx="30" cy="35.3" r="1.7" fill="#e8692d"/><circle cx="30" cy="35.3" r="0.6" fill="#fff3c0"/>
<path d="M17 10 C17 6 21 4.5 27 4.5 C33 4.5 37.5 7 37.5 13 C37.5 21 33 27 27 27 C21 27 17 21 17 14z" fill="#f6cfb7"/>
<circle cx="38.2" cy="15.5" r="1.6" fill="#f0bfa5"/>
<path d="M20 27.5 C13.5 25 10.5 19 11.2 12 C12 4.5 18 1.2 25.5 1.2 C32.5 1.2 37.8 4.5 37.8 10.5 L37.6 14 C34.5 10.6 28 9.6 22.5 12 C19 14.5 18.6 21 20 27.5z" fill="#2f2f2f"/>
<ellipse cx="21.6" cy="16" rx="2.9" ry="2.4" fill="#fff"/><ellipse cx="31.4" cy="16" rx="2.9" ry="2.4" fill="#fff"/>
<circle cx="21.8" cy="16" r="1.8" fill="#8fb0b4"/><circle cx="31.4" cy="16" r="1.8" fill="#8fb0b4"/>
<circle cx="21.8" cy="16" r="0.8" fill="#2b3b3b"/><circle cx="31.4" cy="16" r="0.8" fill="#2b3b3b"/>
<path d="M18.8 13.2 q2.6 -1.6 5.4 0 M28.6 13.2 q2.6 -1.6 5.4 0" stroke="#3a3030" stroke-width="0.6" fill="none"/>
<path d="M22.8 23.3 q1.8 1.6 3.8 0.2 q-1.9 -0.4 -3.8 -0.2z" fill="#d9503a"/>
<text x="24.5" y="43" font-size="6.3" text-anchor="middle" fill="#6f7f8a" font-family="Liberation Serif" textLength="37" lengthAdjust="spacingAndGlyphs"><tspan fill="#4aa8d8">C</tspan>razy<tspan fill="#8cc63f">P</tspan>atterns</text>
<path d="M8 44.6 h33" stroke="#c9c9c9" stroke-width="0.5"/>
<text x="25.5" y="48.8" font-size="4.8" text-anchor="middle" fill="#555" font-family="Liberation Serif">TEAM</text></svg>
<div class="t" style="left:1088.00px;top:637.90px;font-size:15px;line-height:15px;color:#3a66b0;letter-spacing:0.25px;">Happy Wochenende: habt Ihr ein</div>
<div class="t" style="left:1088.00px;top:658.10px;font-size:15px;line-height:15px;color:#3a66b0;letter-spacing:0.25px;">schönes Wochenend-Projekt?</div>
<div class="t" style="left:1088.00px;top:682.35px;font-size:14px;line-height:14px;color:#6f6f6f;letter-spacing:0.4px;">1 aktueller Kommentar <span style="color:#3a66b0">Neu von</span></div>
<div class="t" style="left:1088.00px;top:703.35px;font-size:14px;line-height:14px;color:#3a66b0;letter-spacing:0.35px;">WollwunderPetra</div>
<div class="t" style="left:1088.00px;top:724.25px;font-size:14px;line-height:14px;color:#6f6f6f;letter-spacing:0.3px;">Gestern um 21:09</div>
<svg class="r" style="left:1030px;top:768.5px" width="50" height="50" viewBox="0 0 50 50"><defs><clipPath id="pc"><circle cx="25" cy="25" r="25"/></clipPath>
<radialGradient id="pg" cx="50%" cy="35%" r="65%"><stop offset="0" stop-color="#bf9a86"/><stop offset="1" stop-color="#95705f"/></radialGradient>
<radialGradient id="ng" cx="50%" cy="70%" r="60%"><stop offset="0" stop-color="#fbf1ee"/><stop offset="1" stop-color="#dcbcb2"/></radialGradient></defs>
<g clip-path="url(#pc)">
<rect width="50" height="50" fill="url(#pg)"/>
<path d="M0 10 C10 8 18 10 25 13 C32 10 40 8 50 10 V16 C40 14 32 15 25 18 C18 15 10 14 0 16z" fill="#7f5a4c" opacity="0.45"/>
<path d="M21.5 25 C21 31 15.5 36 14.5 42 C14 47 18.5 50 25 50 C31.5 50 36 47 35.5 42 C34.5 36 29 31 28.5 25 Z" fill="url(#ng)"/>
<path d="M-1 16.5 C6 15.5 15 15.5 21 17 C21.5 24 20.5 30 18 34.5 C14 37.5 5 37.5 1 35 C-1 30 -1.5 22 -1 16.5z" fill="#9c6f86" fill-opacity="0.55" stroke="#4a4050" stroke-width="1.1"/>
<path d="M51 16.5 C44 15.5 35 15.5 29 17 C28.5 24 29.5 30 32 34.5 C36 37.5 45 37.5 49 35 C51 30 51.5 22 51 16.5z" fill="#9c6f86" fill-opacity="0.55" stroke="#4a4050" stroke-width="1.1"/>
<path d="M20.5 19.5 C23 18 27 18 29.5 19.5 L29.5 23 C27 22 23 22 20.5 23z" fill="#2a2628"/>
<path d="M3 23.5 q5 -3 11 0.5 q-5 1.5 -11 -0.5z" fill="#40307a"/><path d="M37 23.8 q5 -3 11 0.2 q-5 1.5 -11 -0.2z" fill="#40307a"/>
</g></svg>
<div class="t" style="left:1088.00px;top:768.90px;font-size:15px;line-height:15px;color:#3a66b0;letter-spacing:0.65px;">Kindertafel 2025</div>
<div class="t" style="left:1088.00px;top:792.95px;font-size:14px;line-height:14px;color:#6f6f6f;letter-spacing:0.4px;">41 aktuelle Kommentare <span style="color:#3a66b0">Neu von</span></div>
<div class="t" style="left:1088.00px;top:813.95px;font-size:14px;line-height:14px;color:#3a66b0;letter-spacing:0.35px;">Akela</div>
<svg class="r" style="left:1030px;top:205px" width="220" height="50" viewBox="0 0 220 50"><rect x="5" y="18.6" width="196" height="10" fill="#f00"/><path d="M177.5 9.8 L205 23.5 L177.5 37.2" fill="none" stroke="#f00" stroke-width="6.2" stroke-linejoin="miter" stroke-miterlimit="10"/></svg>
<div class="t" style="left:1247.60px;top:184.20px;font-size:13px;line-height:13px;color:#111;transform:scaleY(1.08);transform-origin:0 80%;">Hier fehlt ein neuer</div>
<div class="t" style="left:1247.60px;top:203.20px;font-size:13px;line-height:13px;color:#111;transform:scaleY(1.08);transform-origin:0 80%;">Kommentar aus dem</div>
<div class="t" style="left:1247.60px;top:222.20px;font-size:13px;line-height:13px;color:#111;transform:scaleY(1.08);transform-origin:0 80%;">Autoren-Forum</div>
<div class="t" style="left:1405.00px;top:193.50px;font-size:13px;line-height:13px;color:#111;transform:scaleY(1.08);transform-origin:0 80%;">(heute</div>
<div class="t" style="left:1405.00px;top:211.80px;font-size:13px;line-height:13px;color:#111;transform:scaleY(1.08);transform-origin:0 80%;">11:15 Uhr)</div>
</body></html>
